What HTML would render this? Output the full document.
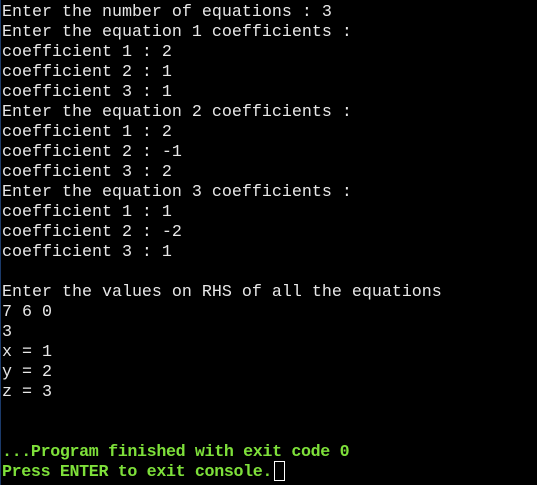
<!DOCTYPE html>
<html><head><style>
html,body{margin:0;padding:0;background:#000;width:537px;height:485px;overflow:hidden}
pre{margin:0;padding:3px 0 0 2px;font-family:"Liberation Mono",monospace;font-size:16.67px;line-height:20px;color:#e8e8e8;white-space:pre}
.g{color:#7ee03a;font-weight:bold;letter-spacing:-0.35px}
.c{position:absolute;left:274px;top:461px;width:9px;height:18px;border:1px solid #fff}
.edge{position:absolute;left:0;top:0;width:1px;height:485px;background:#1b3a6a}
</style></head><body><div class="edge"></div><pre>Enter the number of equations : 3
Enter the equation 1 coefficients :
coefficient 1 : 2
coefficient 2 : 1
coefficient 3 : 1
Enter the equation 2 coefficients :
coefficient 1 : 2
coefficient 2 : -1
coefficient 3 : 2
Enter the equation 3 coefficients :
coefficient 1 : 1
coefficient 2 : -2
coefficient 3 : 1

Enter the values on RHS of all the equations
7 6 0
3
x = 1
y = 2
z = 3


<span class="g">...Program finished with exit code 0</span>
<span class="g">Press ENTER to exit console.</span></pre><div class="c"></div></body></html>
